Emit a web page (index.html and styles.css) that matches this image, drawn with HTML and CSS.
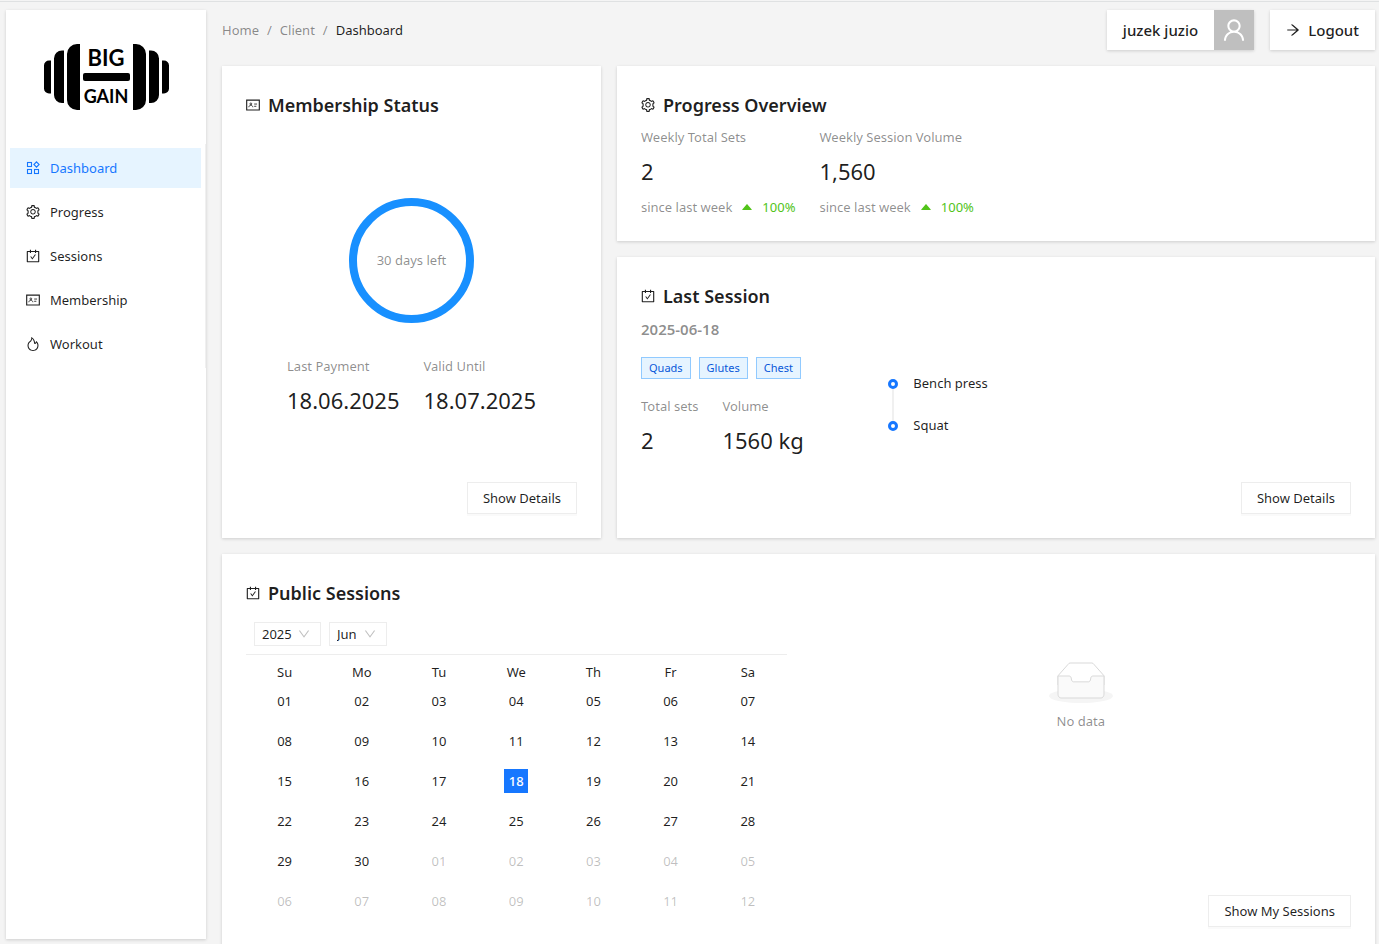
FILE: index.html
```html
<!DOCTYPE html>
<html lang="en">
<head>
<meta charset="utf-8">
<title>Big Gain - Dashboard</title>
<link rel="stylesheet" href="styles.css">
</head>
<body>
<svg class="sprite" aria-hidden="true">
  <symbol id="i-product" viewBox="0 0 14 14"><g fill="none" stroke="currentColor" stroke-width="1.100"><rect x="1.500" y="1.500" width="4" height="4"/><rect x="1.500" y="8.500" width="4" height="4"/><rect x="8.500" y="8.500" width="4" height="4"/><path d="M10.500 .9l2.600 2.600-2.600 2.600-2.600-2.600z"/></g></symbol>
  <symbol id="i-gear" viewBox="64 64 896 896"><path fill="currentColor" d="M924.8 625.7l-65.5-56c3.1-19 4.7-38.4 4.7-57.8s-1.6-38.8-4.7-57.8l65.5-56a32.03 32.03 0 009.3-35.2l-.9-2.6a443.74 443.74 0 00-79.7-137.9l-1.8-2.1a32.12 32.12 0 00-35.1-9.5l-81.3 28.9c-30-24.6-63.5-44-99.7-57.6l-15.7-85a32.05 32.05 0 00-25.8-25.7l-2.7-.5c-52.1-9.4-106.9-9.4-159 0l-2.700.5a32.05 32.05 0 00-25.8 25.7l-15.8 85.4a351.86 351.86 0 00-99 57.400l-81.9-29.1a32 32 0 00-35.1 9.5l-1.8 2.1a446.02 446.02 0 00-79.7 137.9l-.9 2.6c-4.5 12.5-.8 26.5 9.3 35.2l66.3 56.6c-3.1 18.8-4.6 38-4.6 57.1 0 19.2 1.5 38.4 4.6 57.1L99 625.5a32.03 32.03 0 00-9.3 35.2l.9 2.6c18.1 50.4 44.9 96.9 79.7 137.9l1.8 2.1a32.12 32.12 0 0035.1 9.5l81.9-29.1c29.8 24.5 63.1 43.9 99 57.400l15.8 85.4a32.05 32.05 0 0025.8 25.7l2.7.5a449.4 449.4 0 00159 0l2.7-.5a32.05 32.05 0 0025.8-25.7l15.7-85a350 350 0 0099.7-57.6l81.3 28.9a32 32 0 0035.1-9.5l1.8-2.1c34.8-41.1 61.6-87.5 79.7-137.9l.9-2.6c4.5-12.3.8-26.3-9.3-35zM788.3 465.9c2.5 15.1 3.8 30.6 3.8 46.1s-1.3 31-3.8 46.1l-6.6 40.1 74.7 63.9a370.03 370.03 0 01-42.6 73.6L721 702.8l-31.4 25.8c-23.9 19.6-50.5 35-79.3 45.8l-38.1 14.3-17.9 97a377.5 377.5 0 01-85 0l-17.9-97.2-37.8-14.5c-28.5-10.8-55-26.2-78.7-45.7l-31.4-25.9-93.4 33.2c-17-22.9-31.2-47.6-42.6-73.6l75.5-64.5-6.5-40c-2.4-14.9-3.7-30.3-3.7-45.5 0-15.3 1.2-30.6 3.7-45.5l6.5-40-75.5-64.5c11.3-26.1 25.6-50.7 42.6-73.6l93.4 33.2 31.4-25.9c23.7-19.5 50.2-34.9 78.7-45.7l37.9-14.3 17.9-97.2c28.1-3.2 56.8-3.2 85 0l17.9 97 38.1 14.3c28.7 10.8 55.4 26.2 79.3 45.8l31.4 25.8 92.8-32.9c17 22.9 31.2 47.6 42.6 73.6L781.8 426l6.5 39.9zM512 326c-97.2 0-176 78.8-176 176s78.8 176 176 176 176-78.8 176-176-78.8-176-176-176zm79.2 255.2A111.6 111.6 0 01512 614c-29.9 0-58-11.700-79.2-32.8A111.6 111.6 0 01400 502c0-29.9 11.7-58 32.8-79.2C454 401.6 482.1 390 512 390c29.9 0 58 11.6 79.2 32.8A111.6 111.6 0 01624 502c0 29.9-11.7 58-32.8 79.2z"/></symbol>
  <symbol id="i-carry" viewBox="64 64 896 896"><path fill="currentColor" d="M880 184H712v-64c0-4.4-3.6-8-8-8h-56c-4.400 0-8 3.6-8 8v64H384v-64c0-4.400-3.6-8-8-8h-56c-4.400 0-8 3.6-8 8v64H144c-17.7 0-32 14.3-32 32v664c0 17.7 14.3 32 32 32h736c17.7 0 32-14.3 32-32V216c0-17.7-14.3-32-32-32zm-40 656H184V256h128v48c0 4.400 3.6 8 8 8h56c4.400 0 8-3.6 8-8v-48h256v48c0 4.400 3.6 8 8 8h56c4.400 0 8-3.6 8-8v-48h128v584zM688 420h-55.2c-5.1 0-10 2.5-13 6.6L468.9 634.4l-64.700-89c-3-4.1-7.8-6.6-13-6.6H336c-6.5 0-10.3 7.4-6.5 12.700l126.4 174a16.1 16.1 0 0026 0l212.6-292.7c3.8-5.4 0-12.8-6.5-12.800z"/></symbol>
  <symbol id="i-card" viewBox="64 64 896 896"><g fill="none" stroke="currentColor"><path stroke-width="72" d="M108 196h808v632H108z"/><circle cx="373" cy="440" r="58" stroke-width="52"/><path stroke-width="54" d="M244 654c4-74 60-126 129-126s125 52 129 126M586 450h186M586 594h140"/></g></symbol>
  <symbol id="i-fire" viewBox="64 64 896 896"><path fill="currentColor" d="M834.1 469.2A347.49 347.49 0 00751.2 354l-29.1-26.7a8.09 8.09 0 00-13 3.3l-13 37.3c-8.1 23.4-23 47.3-44.1 70.8-1.4 1.5-3 1.9-4.1 2-1.1.1-2.8-.1-4.3-1.5-1.4-1.2-2.1-3-2-4.8 3.7-60.2-14.3-128.1-53.7-202C555.3 171 510 123.1 453.4 89.7l-41.3-24.3c-5.4-3.2-12.3 1-12 7.3l2.2 48c1.5 32.8-2.3 61.8-11.3 85.9-11 29.5-26.8 56.9-47 81.5a295.64 295.64 0 01-47.5 46.1 352.6 352.6 0 00-100.3 121.5A347.75 347.75 0 00160 610c0 47.2 9.3 92.9 27.7 136a349.4 349.4 0 0075.5 110.9c32.4 32 70 57.2 111.9 74.7C418.5 949.8 464.5 959 512 959s93.5-9.2 136.9-27.3A348.6 348.6 0 00760.8 857c32.4-32 57.8-69.4 75.5-110.9a344.2 344.2 0 0027.7-136c0-48.8-10-96.2-29.9-140.900zM713 808.5c-53.7 53.2-125 82.4-201 82.4s-147.3-29.2-201-82.4c-53.5-53.1-83-123.5-83-198.4 0-43.5 9.8-85.2 29.1-124 18.8-37.9 46.8-71.8 80.8-97.9a349.6 349.6 0 0058.6-56.8c25-30.5 44.6-64.5 58.2-101a240 240 0 0012.1-46.5c24.1 22.2 44.3 49 61.2 80.4 33.4 62.6 48.8 118.3 45.8 165.7a74.01 74.01 0 0024.4 59.8 73.36 73.36 0 0053.4 18.8c19.7-1 37.8-9.7 51-24.4 13.3-14.9 24.8-30.1 34.4-45.6 14 17.9 25.7 37.4 35 58.4 15.9 35.8 24 73.9 24 113.1 0 74.9-29.5 145.4-83 198.4z"/></symbol>
  <symbol id="i-user" viewBox="64 64 896 896"><path fill="currentColor" d="M858.5 763.6a374 374 0 00-80.6-119.5 375.63 375.63 0 00-119.5-80.6c-.4-.2-.8-.3-1.2-.5C719.5 518 760 444.7 760 362c0-137-111-248-248-248S264 225 264 362c0 82.7 40.5 156 102.8 201.1-.4.2-.8.3-1.2.5-44.8 18.9-85 46-119.5 80.6a375.63 375.63 0 00-80.6 119.5A371.7 371.7 0 00136 901.8a8 8 0 008 8.2h60c4.4 0 7.9-3.5 8-7.8 2-77.2 33-149.5 87.8-204.3 56.7-56.7 132-87.9 212.2-87.9s155.5 31.2 212.2 87.9C779 752.7 810 825 812 902.2c.1 4.4 3.6 7.8 8 7.8h60a8 8 0 008-8.2c-1-47.8-10.9-94.3-29.5-138.2zM512 534c-45.9 0-89.1-17.9-121.6-50.4S340 407.9 340 362c0-45.9 17.9-89.1 50.4-121.6S466.1 190 512 190s89.1 17.9 121.6 50.4S684 316.1 684 362c0 45.9-17.9 89.1-50.4 121.6S557.9 534 512 534z"/></symbol>
  <symbol id="i-arrow" viewBox="64 64 896 896"><path fill="currentColor" d="M869 487.8L491.2 159.9c-2.9-2.5-6.6-3.9-10.5-3.9h-88.5c-7.4 0-10.8 9.2-5.2 14l350.2 304H152c-4.4 0-8 3.6-8 8v60c0 4.4 3.6 8 8 8h585.1L386.9 854c-5.6 4.9-2.2 14 5.2 14h91.5c1.9 0 3.8-.7 5.2-2L869 536.2a32.07 32.07 0 000-48.4z"/></symbol>
  <symbol id="i-down" viewBox="64 64 896 896"><path fill="currentColor" d="M884 256h-75c-5.1 0-9.9 2.5-12.9 6.6L512 654.2 227.9 262.6c-3-4.1-7.8-6.6-12.9-6.6h-75c-6.5 0-10.3 7.4-6.5 12.7l352.6 486.1c12.8 17.6 39 17.6 51.7 0l352.6-486.1c3.9-5.3.1-12.7-6.4-12.7z"/></symbol>
  <symbol id="i-caret" viewBox="0 0 1024 1024"><path fill="currentColor" d="M858.9 689L530.5 308.2c-9.4-10.9-27.5-10.9-37 0L165.1 689c-12.2 14.2-1.2 35 18.5 35h656.8c19.7 0 30.7-20.8 18.5-35z"/></symbol>
</svg>

<div class="layout">
  <aside class="sidebar">
    <div class="logo">
      <svg width="125" height="66" viewBox="0 0 125 66" role="img" aria-label="Big Gain">
        <path d="M36 0H33a10 10 0 0 0-10 10v46a10 10 0 0 0 10 10h3zM20 6.500h-2a8 8 0 0 0-8 8v36.500a8 8 0 0 0 8 8h2zM7 16.500H5a5 5 0 0 0-5 5v23a5 5 0 0 0 5 5h2zM89 0h3a10 10 0 0 1 10 10v46a10 10 0 0 1-10 10h-3zM105 6.500h2a8 8 0 0 1 8 8v36.500a8 8 0 0 1-8 8h-2zM118 16.500h2a5 5 0 0 1 5 5v23a5 5 0 0 1-5 5h-2z"/>
        <rect x="39" y="29" width="47" height="8" rx="2"/>
        <text class="logo-big" x="62" y="22" text-anchor="middle">BIG</text>
        <text class="logo-gain" x="62" y="59" text-anchor="middle">GAIN</text>
      </svg>
    </div>
    <nav class="menu">
      <a class="menu-item active" href="#"><svg class="icon"><use href="#i-product"/></svg>Dashboard</a>
      <a class="menu-item" href="#"><svg class="icon"><use href="#i-gear"/></svg>Progress</a>
      <a class="menu-item" href="#"><svg class="icon"><use href="#i-carry"/></svg>Sessions</a>
      <a class="menu-item" href="#"><svg class="icon"><use href="#i-card"/></svg>Membership</a>
      <a class="menu-item" href="#"><svg class="icon"><use href="#i-fire"/></svg>Workout</a>
    </nav>
  </aside>

  <main class="main">
    <header class="header">
      <nav class="breadcrumb" aria-label="Breadcrumb"><a href="#">Home</a><span>/</span><a href="#">Client</a><span>/</span><span class="current">Dashboard</span></nav>
      <div class="header-actions">
        <div class="user"><span class="user-name">juzek juzio</span><span class="avatar"><svg class="icon-user"><use href="#i-user"/></svg></span></div>
        <button class="logout" type="button"><svg class="icon"><use href="#i-arrow"/></svg>Logout</button>
      </div>
    </header>

    <div class="cards">
      <section class="card membership">
        <h2 class="title"><svg class="icon"><use href="#i-card"/></svg>Membership Status</h2>
        <div class="membership-body">
          <div class="ring">30 days left</div>
          <div class="stats">
            <div class="stat"><div class="label">Last Payment</div><div class="value">18.06.2025</div></div>
            <div class="stat"><div class="label">Valid Until</div><div class="value">18.07.2025</div></div>
          </div>
        </div>
        <button class="btn" type="button">Show Details</button>
      </section>

      <section class="card">
        <h2 class="title"><svg class="icon"><use href="#i-gear"/></svg>Progress Overview</h2>
        <div class="stats">
          <div class="stat"><div class="label">Weekly Total Sets</div><div class="value">2</div><div class="trend">since last week<svg class="icon"><use href="#i-caret"/></svg><span class="up">100%</span></div></div>
          <div class="stat"><div class="label">Weekly Session Volume</div><div class="value">1,560</div><div class="trend">since last week<svg class="icon"><use href="#i-caret"/></svg><span class="up">100%</span></div></div>
        </div>
      </section>

      <section class="card session">
        <h2 class="title"><svg class="icon"><use href="#i-carry"/></svg>Last Session</h2>
        <div class="session-body">
          <div>
            <div class="date">2025-06-18</div>
            <div class="tags"><span class="tag">Quads</span><span class="tag">Glutes</span><span class="tag">Chest</span></div>
            <div class="stats">
              <div class="stat"><div class="label">Total sets</div><div class="value">2</div></div>
              <div class="stat"><div class="label">Volume</div><div class="value">1560 kg</div></div>
            </div>
          </div>
          <ul class="timeline"><li>Bench press</li><li>Squat</li></ul>
        </div>
        <button class="btn" type="button">Show Details</button>
      </section>

      <section class="card public">
        <h2 class="title"><svg class="icon"><use href="#i-carry"/></svg>Public Sessions</h2>
        <div class="public-body">
          <div class="calendar">
            <div class="calendar-header">
              <span class="select year"><select aria-label="Year"><option>2025</option></select><svg class="chevron"><use href="#i-down"/></svg></span>
              <span class="select month"><select aria-label="Month"><option>Jun</option></select><svg class="chevron"><use href="#i-down"/></svg></span>
            </div>
            <table class="days">
              <thead><tr><th>Su</th><th>Mo</th><th>Tu</th><th>We</th><th>Th</th><th>Fr</th><th>Sa</th></tr></thead>
              <tbody>
                <tr><td>01</td><td>02</td><td>03</td><td>04</td><td>05</td><td>06</td><td>07</td></tr>
                <tr><td>08</td><td>09</td><td>10</td><td>11</td><td>12</td><td>13</td><td>14</td></tr>
                <tr><td>15</td><td>16</td><td>17</td><td><span class="selected">18</span></td><td>19</td><td>20</td><td>21</td></tr>
                <tr><td>22</td><td>23</td><td>24</td><td>25</td><td>26</td><td>27</td><td>28</td></tr>
                <tr><td>29</td><td>30</td><td class="out">01</td><td class="out">02</td><td class="out">03</td><td class="out">04</td><td class="out">05</td></tr>
                <tr><td class="out">06</td><td class="out">07</td><td class="out">08</td><td class="out">09</td><td class="out">10</td><td class="out">11</td><td class="out">12</td></tr>
              </tbody>
            </table>
          </div>
          <div class="public-side">
            <div class="empty">
              <svg width="64" height="41" viewBox="0 0 64 41"><g transform="translate(0 1)" fill="none" fill-rule="evenodd"><ellipse fill="#f5f5f5" cx="32" cy="33" rx="32" ry="7"/><g stroke="#d9d9d9"><path d="M55 12.76L44.854 1.258C44.367.474 43.656 0 42.907 0H21.093c-.749 0-1.46.474-1.947 1.257L9 12.761V22h46v-9.240z"/><path fill="#fafafa" d="M41.613 15.931c0-1.605.994-2.930 2.227-2.931H55v18.137C55 33.260 53.680 35 52.050 35h-40.100C10.320 35 9 33.259 9 31.137V13h11.160c1.233 0 2.227 1.323 2.227 2.928v.022c0 1.605 1.005 2.901 2.237 2.901h14.752c1.232 0 2.237-1.308 2.237-2.913v-.007z"/></g></g></svg>
              <span>No data</span>
            </div>
            <button class="btn" type="button">Show My Sessions</button>
          </div>
        </div>
      </section>
    </div>
  </main>
</div>
</body>
</html>
```
FILE: styles.css
```css
*, *::before, *::after { box-sizing: border-box; }
html { scrollbar-width: none; }
body {
  margin: 0;
  padding-top: 1px;
  background: #f4f4f4;
  color: rgba(0, 0, 0, 0.88);
  font: 13px/22px "Segoe UI", "Noto Sans", sans-serif;
}
button, select { font: inherit; color: inherit; }
a { color: inherit; text-decoration: none; }
.sprite { display: none; }
.icon { width: 14px; height: 14px; flex: none; }

.layout { display: flex; gap: 16px; padding: 8px 4px 5px 6px; border-top: 1px solid #dfe1e2; }
.sidebar, .card, .user, .logout {
  background: #fff;
  box-shadow: 0 1px 3px rgba(0, 0, 0, 0.16);
}
.sidebar { width: 200px; height: calc(100vh - 15px); flex: none; }
.logo { height: 134px; display: flex; align-items: center; justify-content: center; padding-left: 1px; }
.menu { display: flex; flex-direction: column; gap: 4px; padding: 4px; border-right: 1px solid #f0f0f0; }
.menu-item { display: flex; align-items: center; gap: 10px; height: 40px; padding: 0 16px; }
.menu-item.active { background: #e6f4ff; color: #1677ff; }
.logo-big, .logo-gain { font-family: Lato, sans-serif; font-weight: 700; }
.logo-big { font-size: 22px; }
.logo-gain { font-size: 18px; }

.main { flex: 1; min-width: 0; }
.header { display: flex; justify-content: space-between; align-items: center; height: 40px; margin-bottom: 16px; }
.breadcrumb { display: flex; gap: 8px; color: rgba(0, 0, 0, 0.45); }
.breadcrumb .current { color: rgba(0, 0, 0, 0.88); }
.header-actions { display: flex; gap: 16px; font-size: 15px; font-weight: 500; }
.user { display: flex; align-items: center; }
.user-name { padding: 0 16px; }
.avatar { display: flex; align-items: center; justify-content: center; width: 40px; height: 40px; background: #bfbfbf; color: #fff; }
.icon-user { width: 24px; height: 24px; }
.logout { display: flex; align-items: center; gap: 8px; height: 40px; padding: 0 16px; border: 0; }

.cards { display: grid; grid-template-columns: 1fr 2fr; gap: 16px; }
.card { min-width: 0; padding: 24px; }
.membership { grid-row: span 2; }
.public { grid-column: span 2; }
.membership, .session { display: flex; flex-direction: column; }
.title { display: flex; align-items: center; gap: 8px; margin: 0 0 6px; font-size: 18px; line-height: 30px; font-weight: 600; }
.btn { align-self: flex-end; height: 32px; padding: 0 15px; border: 1px solid #ededed; background: #fff; box-shadow: 0 2px 0 rgba(0, 0, 0, 0.02); }

.label, .ring, .trend { color: rgba(0, 0, 0, 0.45); }
.label { margin-bottom: 4px; }
.value { font-size: 22px; line-height: 38px; }
.stats { display: flex; gap: 24px; }
.trend { display: flex; align-items: center; gap: 8px; margin-top: 7px; line-height: 20px; }
.trend .icon, .up { color: #52c41a; }

.membership-body { flex: 1; display: flex; flex-direction: column; align-items: center; justify-content: center; gap: 32px; padding-top: 8px; }
.ring { display: flex; align-items: center; justify-content: center; width: 125px; height: 125px; border: 8px solid #1890ff; border-radius: 50%; }

.session-body { display: grid; grid-template-columns: 1fr 2fr; gap: 16px; margin-bottom: 23px; }
.date { margin-bottom: 16px; color: rgba(0, 0, 0, 0.45); font-size: 15px; line-height: 24px; font-weight: 600; }
.tags { display: flex; gap: 8px; margin-bottom: 16px; }
.tag { padding: 0 7px; border: 1px solid #91caff; background: #e6f4ff; color: #0958d9; font-size: 11px; line-height: 20px; }
.timeline { list-style: none; margin: 0; padding: 55px 0 0; }
.timeline li { position: relative; padding: 0 0 20px 25px; }
.timeline li::before { content: ""; position: absolute; top: 7px; left: 0; width: 10px; height: 10px; border: 3px solid #1677ff; border-radius: 50%; }
.timeline li:not(:last-child)::after { content: ""; position: absolute; top: 17px; bottom: -7px; left: 4px; width: 2px; background: #f0f0f0; }

.public-body { display: grid; grid-template-columns: 1fr 1fr; gap: 24px; padding-top: 8px; }
.calendar { padding-bottom: 6px; }
.calendar-header { display: flex; gap: 8px; padding: 0 8px 8px; border-bottom: 1px solid #ededed; }
.select { position: relative; height: 24px; }
.select select { width: 100%; height: 24px; padding: 0 7px; border: 1px solid #ededed; border-radius: 0; background: #fff; appearance: none; }
.year { width: 67px; }
.month { width: 58px; }
.chevron { position: absolute; top: 6px; right: 11px; width: 12px; height: 12px; color: rgba(0, 0, 0, 0.25); pointer-events: none; }
.days { width: 100%; table-layout: fixed; border-collapse: collapse; text-align: center; }
.days th { height: 26px; padding: 8px 0 0; font-weight: 400; line-height: 18px; }
.days td { height: 40px; padding: 0; }
.days .out { color: rgba(0, 0, 0, 0.25); }
.selected { display: inline-block; width: 24px; line-height: 24px; background: #1677ff; color: #fff; font-weight: 500; }
.public-side { display: flex; flex-direction: column; justify-content: space-between; }
.empty { display: flex; flex-direction: column; align-items: center; gap: 7px; padding-top: 40px; color: rgba(0, 0, 0, 0.45); }
```
